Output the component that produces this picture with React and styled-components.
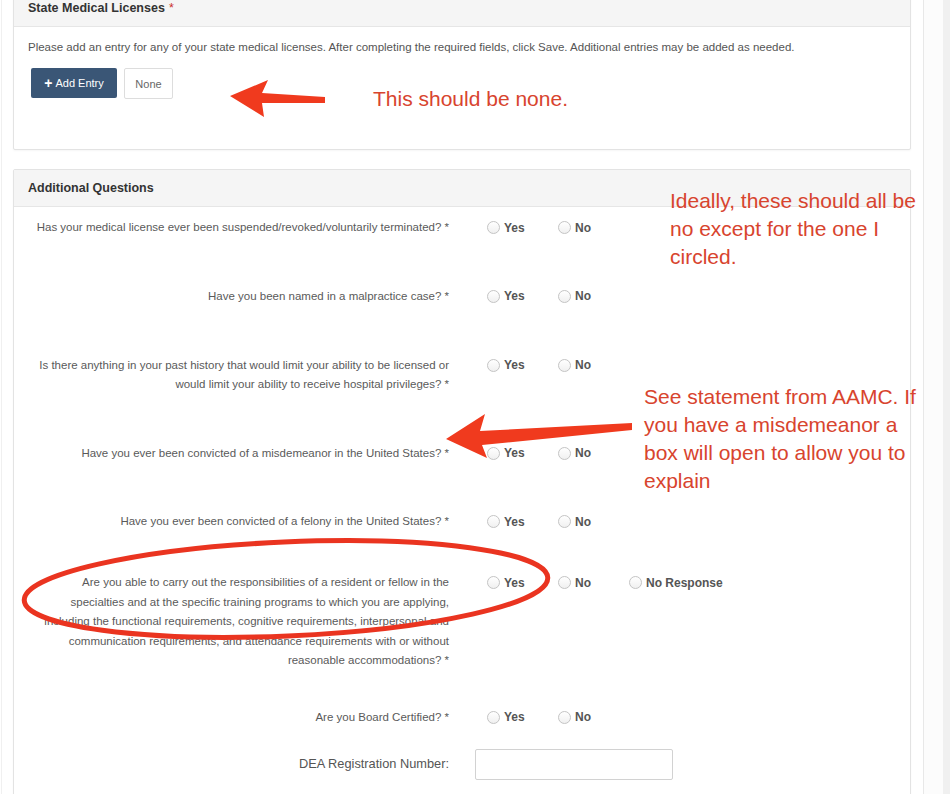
import React from 'react';
import styled, { createGlobalStyle } from 'styled-components';

const questions = [
  { lines: ['Has your medical license ever been suspended/revoked/voluntarily terminated? *'] },
  { lines: ['Have you been named in a malpractice case? *'], space: 49.5 },
  {
    lines: [
      'Is there anything in your past history that would limit your ability to be licensed or',
      'would limit your ability to receive hospital privileges? *',
    ],
  },
  { lines: ['Have you ever been convicted of a misdemeanor in the United States? *'] },
  { lines: ['Have you ever been convicted of a felony in the United States? *'], space: 41.5 },
  {
    lines: [
      'Are you able to carry out the responsibilities of a resident or fellow in the',
      'specialties and at the specific training programs to which you are applying,',
      'including the functional requirements, cognitive requirements, interpersonal and',
      'communication requirements, and attendance requirements with or without',
      'reasonable accommodations? *',
    ],
    options: ['Yes', 'No', 'No Response'],
    space: 37,
  },
  { lines: ['Are you Board Certified? *'], space: 29 },
];

const App = () => {
  return (
    <Page>
      <GlobalStyle />
      <Main>
        <Panel>
          <Heading>
            State Medical Licenses <Req>*</Req>
          </Heading>
          <Body $top={12} $bottom={50}>
            <Intro>
              Please add an entry for any of your state medical licenses. After completing the
              required fields, click Save. Additional entries may be added as needed.
            </Intro>
            <Buttons>
              <PrimaryBtn>
                <Plus>+</Plus> Add Entry
              </PrimaryBtn>
              <PlainBtn>None</PlainBtn>
            </Buttons>
          </Body>
        </Panel>

        <Panel>
          <Heading>Additional Questions</Heading>
          <Body $top={11} $bottom={20}>
            {questions.map((q, i) => (
              <Row key={i} $space={q.space}>
                <Label>
                  {q.lines.map((l) => (
                    <Line key={l}>{l}</Line>
                  ))}
                </Label>
                <Options>
                  {(q.options || ['Yes', 'No']).map((o) => (
                    <Option key={o}>
                      <Radio />
                      {o}
                    </Option>
                  ))}
                </Options>
              </Row>
            ))}
            <Row $space={0}>
              <FieldLabel>DEA Registration Number:</FieldLabel>
              <TextInput />
            </Row>
          </Body>
        </Panel>
      </Main>
      <Rail>
        <Track />
      </Rail>

      {/* reviewer's markup drawn over the form */}
      <Markup viewBox="0 0 950 794">
        <polygon points="230,96 268,80 262,93 325,97 325,103 262,103 264,117" fill="#f03a1e" />
        <polygon points="446,439 485,414 480,431 632,423 632,430 482,445 487,458" fill="#f03a1e" />
        <ellipse
          cx="286"
          cy="589"
          rx="262"
          ry="47"
          transform="rotate(-2.5 286 589)"
          fill="none"
          stroke="#ea3420"
          strokeWidth="5"
        />
      </Markup>
      <Note $x={373} $y={85}>This should be none.</Note>
      <Note $x={670} $y={187}>
        Ideally, these should all be
        <br />
        no except for the one I
        <br />
        circled.
      </Note>
      <Note $x={644} $y={383}>
        See statement from AAMC. If
        <br />
        you have a misdemeanor a
        <br />
        box will open to allow you to
        <br />
        explain
      </Note>
    </Page>
  );
};

const GlobalStyle = createGlobalStyle`
  html, body {
    margin: 0;
    padding: 0;
    background: #fff;
  }
  body {
    font-family: "Liberation Sans", Arial, sans-serif;
    overflow: hidden;
  }
`;

const Page = styled.div`
  position: relative;
  display: flex;
  width: 950px;
  height: 794px;
  overflow: hidden;
  background: #fff;
`;

const Main = styled.div`
  flex: 1;
  margin: -11px 0 0 1px;
  border-left: 1px solid #f0f0f0;
  padding: 0 12px 0 11px;
`;

const Rail = styled.div`
  width: 26px;
  border-left: 1px solid #e8e8e8;
  display: flex;
  justify-content: flex-end;
  background: #fcfcfc;
`;

const Track = styled.div`
  width: 7px;
  background: #f0f0f0;
`;

const Panel = styled.div`
  background: #fff;
  border: 1px solid #e3e3e3;
  border-radius: 2px;
  box-shadow: 0 1px 2px rgba(0, 0, 0, 0.04);
  margin-bottom: 19px;
`;

const Heading = styled.div`
  height: 36px;
  display: flex;
  align-items: center;
  gap: 4px;
  padding: 0 14px;
  background: #f5f5f5;
  border-bottom: 1px solid #e6e6e6;
  font-size: 12.5px;
  font-weight: bold;
  color: #333;
`;

const Req = styled.span`
  color: #c9302c;
  font-weight: normal;
`;

const Body = styled.div`
  padding: ${(p) => p.$top}px 14px ${(p) => p.$bottom}px 14px;
`;

const Intro = styled.p`
  margin: 0 0 13px;
  font-size: 11.5px;
  line-height: 16px;
  color: #555;
`;

const Buttons = styled.div`
  display: flex;
  gap: 7px;
  padding-left: 3px;
`;

const PrimaryBtn = styled.button`
  height: 30px;
  width: 86px;
  border: none;
  border-radius: 2px;
  background: #3a5676;
  color: #fff;
  font-family: inherit;
  font-size: 11px;
  display: flex;
  align-items: center;
  justify-content: center;
  gap: 3px;
`;

const Plus = styled.span`
  font-weight: bold;
  font-size: 14px;
  line-height: 1;
`;

const PlainBtn = styled.button`
  height: 31px;
  width: 49px;
  border: 1px solid #ddd;
  border-radius: 2px;
  background: #fff;
  color: #666;
  font-family: inherit;
  font-size: 11px;
`;

const Row = styled.div`
  display: grid;
  grid-template-columns: 421px 1fr;
  column-gap: 26px;
  align-items: start;
  margin-bottom: ${(p) => (p.$space === undefined ? 49 : p.$space)}px;
`;

const Label = styled.div`
  text-align: right;
  font-size: 11.5px;
  line-height: 19.5px;
  color: #5a5a5a;
`;

const Line = styled.span`
  display: block;
  white-space: nowrap;
`;

const Options = styled.div`
  display: flex;
  height: 19.5px;
  align-items: center;
  padding-left: 12px;
`;

const Option = styled.label`
  width: 71px;
  display: flex;
  align-items: center;
  gap: 4px;
  font-size: 12px;
  font-weight: bold;
  color: #555;
  white-space: nowrap;
`;

const Radio = styled.span`
  width: 11px;
  height: 11px;
  border-radius: 50%;
  border: 1px solid #c4c4c4;
  background: linear-gradient(#fff, #f0f0f0);
  flex-shrink: 0;
`;

const FieldLabel = styled.div`
  text-align: right;
  font-size: 12.8px;
  line-height: 16px;
  color: #555;
`;

const TextInput = styled.input`
  box-sizing: border-box;
  width: 198px;
  height: 31px;
  margin-top: -7px;
  border: 1px solid #d2d2d2;
  border-radius: 2px;
  background: #fff;
`;

const Markup = styled.svg`
  position: absolute;
  left: 0;
  top: 0;
  width: 950px;
  height: 794px;
  pointer-events: none;
`;

const Note = styled.div`
  position: absolute;
  left: ${(p) => p.$x}px;
  top: ${(p) => p.$y}px;
  font-size: 21px;
  line-height: 28px;
  color: #d8442e;
  white-space: nowrap;
`;

export default App;
